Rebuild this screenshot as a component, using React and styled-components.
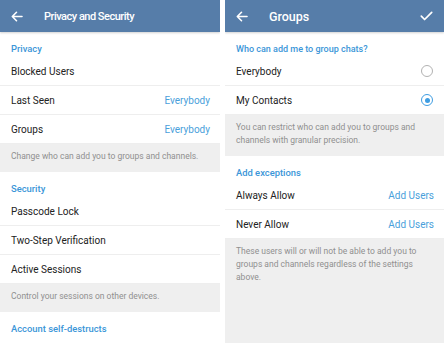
import styled, { createGlobalStyle } from 'styled-components';

const GlobalStyle = createGlobalStyle`
    html, body {
        margin: 0;
        padding: 0;
        background: #ffffff;
    }
    body {
        font-family: Roboto, "Noto Sans", sans-serif;
        -webkit-font-smoothing: antialiased;
    }
`;

const BackIcon = () => (
    <svg width="12" height="11" viewBox="0 0 12 11" fill="none" stroke="#fff" strokeWidth="1.6" strokeLinecap="round" strokeLinejoin="round">
        <path d="M11 5.5H1.5M5.5 1.3L1.3 5.5L5.5 9.7" />
    </svg>
);

const CheckIcon = () => (
    <svg width="13" height="10" viewBox="0 0 13 10" fill="none" stroke="#fff" strokeWidth="1.7" strokeLinecap="round" strokeLinejoin="round">
        <path d="M1.3 5.2L4.6 8.5L11.7 1.4" />
    </svg>
);

const App = () => {
    return (
        <>
            <GlobalStyle />
            <Screen>
                <Panel>
                    <Header>
                        <BackButton><BackIcon /></BackButton>
                        <Title $tight>Privacy and Security</Title>
                    </Header>
                    <SectionTitle>Privacy</SectionTitle>
                    <Row><Label>Blocked Users</Label></Row>
                    <Row><Label>Last Seen</Label><Value>Everybody</Value></Row>
                    <Row><Label>Groups</Label><Value>Everybody</Value></Row>
                    <Hint>Change who can add you to groups and channels.</Hint>
                    <SectionTitle>Security</SectionTitle>
                    <Row><Label>Passcode Lock</Label></Row>
                    <Row><Label>Two-Step Verification</Label></Row>
                    <Row><Label>Active Sessions</Label></Row>
                    <Hint>Control your sessions on other devices.</Hint>
                    <SectionTitle>Account self-destructs</SectionTitle>
                </Panel>
                <Panel $grow>
                    <Header>
                        <BackButton><BackIcon /></BackButton>
                        <Title>Groups</Title>
                        <Action><CheckIcon /></Action>
                    </Header>
                    <SectionTitle $tight>Who can add me to group chats?</SectionTitle>
                    <Row><Label>Everybody</Label><Radio /></Row>
                    <Row><Label>My Contacts</Label><Radio $checked /></Row>
                    <Hint>You can restrict who can add you to groups and channels with granular precision.</Hint>
                    <SectionTitle>Add exceptions</SectionTitle>
                    <Row><Label>Always Allow</Label><Value>Add Users</Value></Row>
                    <Row><Label>Never Allow</Label><Value>Add Users</Value></Row>
                    <Hint $fill>These users will or will not be able to add you to groups and channels regardless of the settings above.</Hint>
                </Panel>
            </Screen>
        </>
    );
}

export default App;

const Screen = styled.div`
    display: flex;
    gap: 5px;
    width: 444px;
    height: 343px;
    overflow: hidden;
    background: #ffffff;
`;

const Panel = styled.div`
    display: flex;
    flex-direction: column;
    flex: ${p => p.$grow ? '1' : '0 0 220px'};
    height: 343px;
    background: #ffffff;
    overflow: hidden;
`;

const Header = styled.div`
    display: flex;
    align-items: center;
    flex: 0 0 32px;
    height: 32px;
    padding: 0 10px 0 11px;
    background: #567da9;
    box-shadow: 0 1px 2px rgba(0, 0, 0, 0.18);
    position: relative;
    z-index: 1;
`;

const BackButton = styled.div`
    display: flex;
    align-items: center;
    width: 33px;
`;

const Title = styled.div`
    flex: 1;
    color: #ffffff;
    font-size: ${p => p.$tight ? '11px' : '12.5px'};
    letter-spacing: ${p => p.$tight ? '-0.5px' : '0'};
    font-weight: 500;
    white-space: nowrap;
`;

const Action = styled.div`
    display: flex;
    align-items: center;
    padding-right: 1px;
`;

const SectionTitle = styled.div`
    flex: 0 0 25px;
    box-sizing: border-box;
    padding: 11px 11px 0;
    line-height: 12px;
    font-size: ${p => p.$tight ? '9px' : '9.4px'};
    font-weight: 500;
    color: #3b96d8;
    white-space: nowrap;
`;

const Row = styled.div`
    display: flex;
    align-items: center;
    justify-content: space-between;
    flex: 0 0 29px;
    box-sizing: border-box;
    padding: 0 10px 0 11px;
    border-bottom: 1px solid #eeeeee;
`;

const Label = styled.span`
    font-size: 10px;
    color: #222222;
    white-space: nowrap;
`;

const Value = styled.span`
    font-size: 10px;
    color: #4a9fdb;
    white-space: nowrap;
`;

const Radio = styled.span`
    box-sizing: border-box;
    width: 12px;
    height: 12px;
    margin-right: 1px;
    border-radius: 50%;
    border: 1.5px solid ${p => p.$checked ? '#3e9de2' : '#b2b2b2'};
    display: flex;
    align-items: center;
    justify-content: center;

    &::after {
        content: '';
        display: ${p => p.$checked ? 'block' : 'none'};
        width: 5px;
        height: 5px;
        border-radius: 50%;
        background: #3e9de2;
    }
`;

const Hint = styled.div`
    flex: ${p => p.$fill ? '1' : '0 0 auto'};
    padding: 6px 11px 9px;
    background: #efefef;
    color: #8f8f8f;
    font-size: 8.5px;
    line-height: 13px;
`;
